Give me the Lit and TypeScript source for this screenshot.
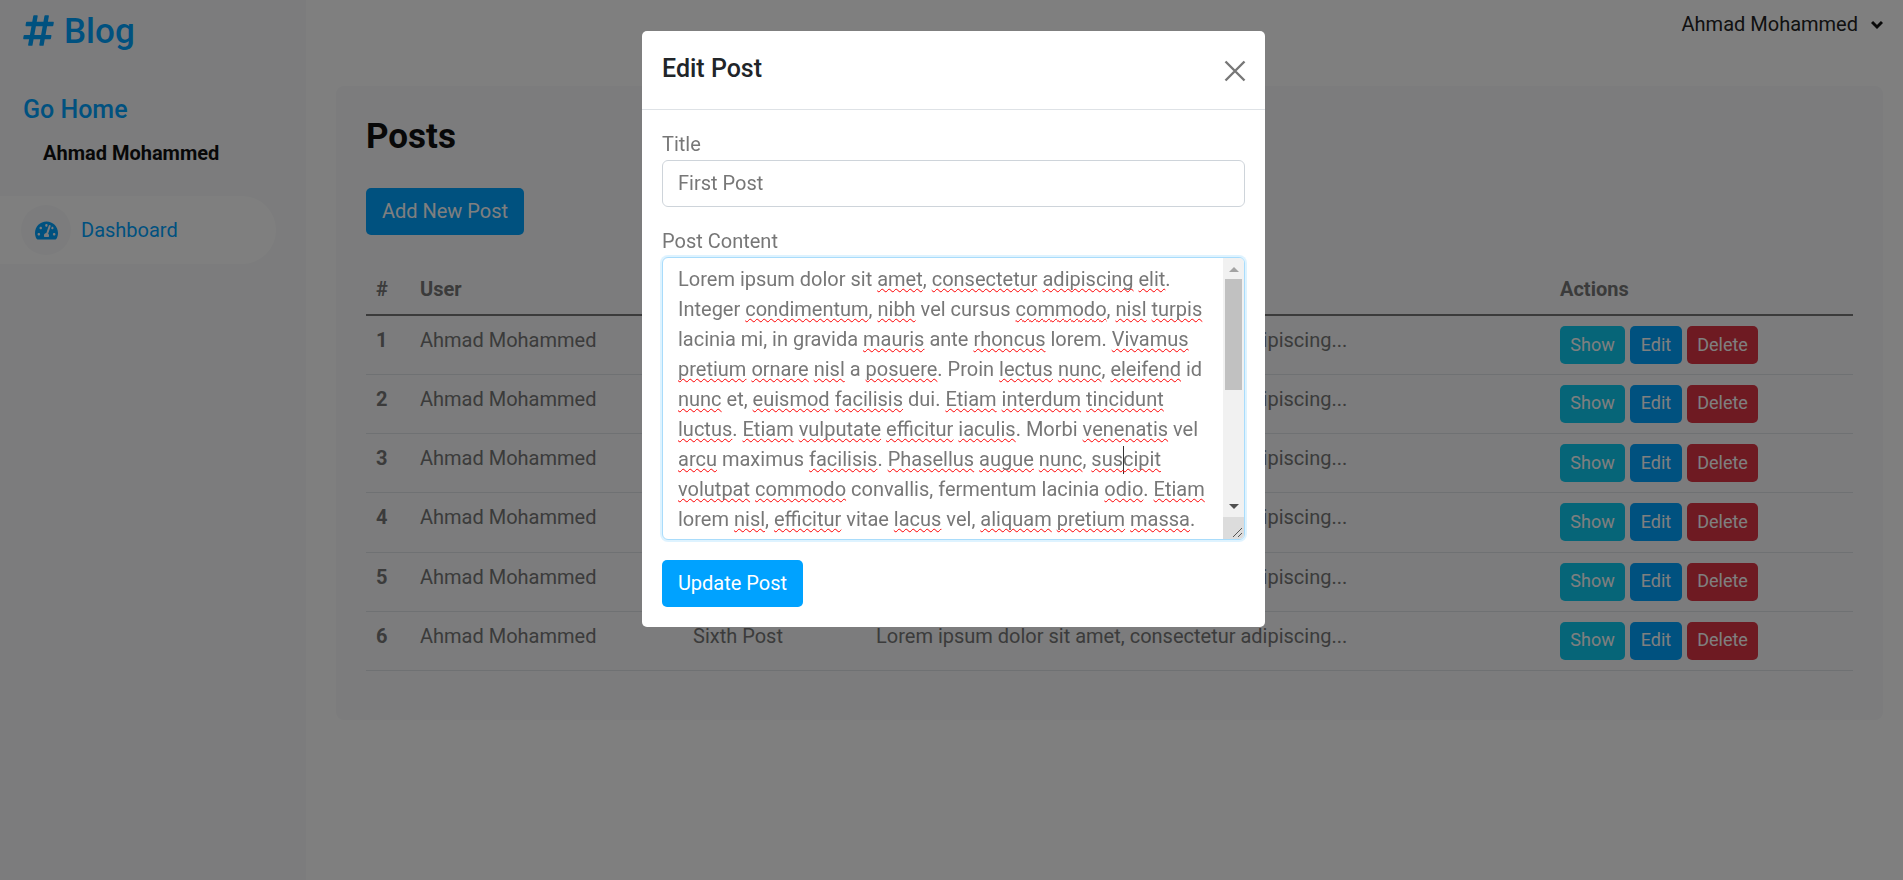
import { LitElement, html, css, svg } from "lit";
import { customElement } from "lit/decorators.js";

const posts = ["First Post", "Second Post", "Third Post", "Fourth Post", "Fifth Post", "Sixth Post"];
const gauge = svg`<path d="M288 32C128.94 32 0 160.94 0 320c0 52.8 14.25 102.26 39.06 144.8 5.61 9.62 16.3 15.2 27.44 15.2h443c11.14 0 21.83-5.58 27.44-15.2C561.75 422.26 576 372.8 576 320c0-159.06-128.94-288-288-288zm0 64c14.71 0 26.58 10.13 30.32 23.65-1.11 2.26-2.64 4.23-3.45 6.67l-9.22 27.67c-5.13 3.49-10.97 6.01-17.64 6.01-17.67 0-32-14.33-32-32S270.33 96 288 96zM96 384c-17.67 0-32-14.33-32-32s14.33-32 32-32 32 14.33 32 32-14.33 32-32 32zm48-160c-17.67 0-32-14.33-32-32s14.33-32 32-32 32 14.33 32 32-14.33 32-32 32zm246.77-72.41l-61.33 184C343.13 347.33 352 364.54 352 384c0 11.72-3.38 22.55-8.88 32H232.88c-5.5-9.45-8.88-20.28-8.88-32 0-33.94 26.5-61.43 59.9-63.59l61.34-184.01c4.17-12.56 17.73-19.45 30.36-15.17 12.57 4.19 19.35 17.77 15.17 30.36zm14.66 57.2l15.52-46.55c3.47-1.29 7.13-2.23 11.05-2.23 17.67 0 32 14.33 32 32s-14.33 32-32 32c-11.38-.01-20.89-6.28-26.57-15.22zM480 384c-17.67 0-32-14.33-32-32s14.33-32 32-32 32 14.33 32 32-14.33 32-32 32z"/>`;
const hash = svg`<path d="M440.667 182.109l7.143-40c1.313-7.355-4.342-14.109-11.813-14.109h-74.81l14.623-81.891C377.123 38.754 371.468 32 363.997 32h-40.632a12 12 0 0 0-11.813 9.891L296.175 128H197.54l14.623-81.891C213.477 38.754 207.822 32 200.35 32h-40.632a12 12 0 0 0-11.813 9.891L132.528 128H53.432a12 12 0 0 0-11.813 9.891l-7.143 40C33.163 185.246 38.818 192 46.289 192h74.81L98.242 320H19.146a12 12 0 0 0-11.813 9.891l-7.143 40C-1.123 377.246 4.532 384 12.003 384h74.81L72.19 465.891C70.877 473.246 76.532 480 84.003 480h40.632a12 12 0 0 0 11.813-9.891L151.826 384h98.634l-14.623 81.891C234.523 473.246 240.178 480 247.65 480h40.632a12 12 0 0 0 11.813-9.891L315.472 384h79.096a12 12 0 0 0 11.813-9.891l7.143-40c1.313-7.355-4.342-14.109-11.813-14.109h-74.81l22.857-128h79.096a12 12 0 0 0 11.813-9.891zM261.889 320h-98.634l22.857-128h98.634l-22.857 128z"/>`;

@customElement("app-root")
export class AppRoot extends LitElement {
  static styles = css`
    :host { display: block; height: 880px; overflow: hidden; font-family: Roboto, "Liberation Sans", sans-serif; font-size: 20px; color: #777; background: #fff; }
    * { box-sizing: border-box; }
    .page { display: flex; height: 880px; }
    .side { width: 306px; flex: none; background: #f8f9fa; }
    .brand { height: 62px; padding: 11px 0 0 23px; font-size: 35px; line-height: 42px; font-weight: 500; color: #00a2ff; white-space: nowrap; display: flex; align-items: flex-start; gap: 10px; }
    .hash { width: 31px; height: 35px; margin-top: 2px; fill: #00a2ff; }
    .home { margin-top: 33px; padding-left: 23px; font-size: 25px; line-height: 30px; font-weight: 500; color: #00a2ff; }
    .who { margin-top: 14px; padding-left: 43px; line-height: 28px; font-weight: 700; color: #111; }
    .nav { margin-top: 29px; width: 276px; height: 68px; display: flex; align-items: center; gap: 10px; padding-left: 21px; background: #fff; border-radius: 0 34px 34px 0; color: #00a2ff; }
    .circle { width: 50px; height: 50px; border-radius: 50%; background: #f8f9fa; display: flex; align-items: center; justify-content: center; }
    .circle svg { width: 23px; height: 21px; fill: #00a2ff; }
    .main { flex: 1; min-width: 0; padding-right: 20px; }
    .top { height: 86px; display: flex; justify-content: flex-end; align-items: flex-start; gap: 13px; padding-top: 10px; line-height: 28px; color: #222; }
    .chev { width: 12px; height: 28px; fill: none; stroke: #111; stroke-width: 3; }
    .card { margin-left: 30px; height: 634px; background: #f8f9fa; border-radius: 8px; padding: 31px 30px 0; }
    h1 { margin: 0; font-size: 35px; line-height: 40px; font-weight: 700; color: #111; }
    .btn { display: inline-flex; align-items: center; justify-content: center; border-radius: 5px; color: #fff; background: #00a2ff; padding-bottom: 2px; }
    .add { margin-top: 31px; width: 158px; height: 47px; }
    table { margin-top: 37px; width: 1487px; border-collapse: collapse; table-layout: fixed; }
    th { text-align: left; padding: 3px 10px 0; height: 43px; vertical-align: top; line-height: 28px; font-weight: 700; border-bottom: 2px solid #777; }
    td { padding: 11px 10px 0; height: 59.25px; vertical-align: top; line-height: 27px; border-bottom: 1px solid #dee2e6; }
    .num { font-weight: 700; }
    .acts { padding: 10px 0 0 10px; }
    .row { display: flex; gap: 5px; }
    .sm { height: 38px; font-size: 18px; }
    .show { width: 65px; background: #0dcaf0; }
    .edit { width: 52px; background: #00a2ff; }
    .del { width: 71px; background: #dc3545; }
    .overlay { position: fixed; inset: 0; background: rgba(0,0,0,.5); display: flex; align-items: flex-start; padding: 31px 0 0 642px; }
    .modal { width: 623px; height: 596px; background: #fff; border-radius: 5px; display: flex; flex-direction: column; }
    .head { height: 79px; flex: none; border-bottom: 1px solid #dee2e6; display: flex; align-items: center; justify-content: space-between; padding: 0 20px; }
    .head h2 { margin: 0 0 3px; font-size: 25px; font-weight: 500; color: #212529; line-height: 30px; }
    .x { width: 24px; height: 24px; margin: 1px -2px 0 0; stroke: #777; stroke-width: 2.4; fill: none; }
    .body { padding: 20px 20px 0; display: flex; flex-direction: column; }
    label { line-height: 28px; display: block; }
    .input { margin-top: 2px; height: 47px; border: 1px solid #ced4da; border-radius: 6px; padding: 0 15px 2px; display: flex; align-items: center; margin-bottom: 20px; }
    .area { margin-top: 2px; height: 283px; border: 1px solid #a9dcfb; border-radius: 6px; box-shadow: 0 0 0 2px rgba(0,162,255,.13); display: flex; overflow: hidden; background: #fff; }
    .text { flex: 1; min-width: 0; padding: 6px 15px 0; line-height: 30px; overflow: hidden; }
    .w { text-decoration: underline wavy #f00 1.3px; text-underline-offset: 2px; text-decoration-skip-ink: none; }
    .caret { display: inline-block; width: 1px; height: 28px; margin-right: -1px; background: #333; vertical-align: -8px; }
    .bar { width: 21px; flex: none; padding: 0 2px; background: #f1f1f1; display: flex; flex-direction: column; align-items: center; }
    .up { width: 0; height: 0; margin-top: 9px; border: 5px solid transparent; border-top: 0; border-bottom: 5px solid #a3a3a3; }
    .thumb { width: 17px; height: 111px; margin-top: 7px; background: #c1c1c1; }
    .down { width: 0; height: 0; margin-top: 114px; border: 5px solid transparent; border-bottom: 0; border-top: 5px solid #505050; }
    .grip { margin: auto -2px 0; flex: none; width: 21px; height: 22px; background: #dcdcdc; stroke: #555; stroke-width: 1; fill: none; }
    .update { margin-top: 20px; width: 141px; height: 47px; }
  `;

  private w(t: string) { return html`<span class="w">${t}</span>`; }

  render() {
    const w = (t: string) => this.w(t);
    return html`
      <div class="page">
        <aside class="side">
          <div class="brand"><svg class="hash" viewBox="0 0 448 512">${hash}</svg><span>Blog</span></div>
          <div class="home">Go Home</div>
          <div class="who">Ahmad Mohammed</div>
          <div class="nav">
            <span class="circle"><svg viewBox="0 0 576 512">${gauge}</svg></span>
            <span>Dashboard</span>
          </div>
        </aside>
        <div class="main">
          <div class="top">
            <span>Ahmad Mohammed</span>
            <svg class="chev" viewBox="0 0 12 28"><path d="M1 12 6 17l5-5"/></svg>
          </div>
          <section class="card">
            <h1>Posts</h1>
            <div class="btn add">Add New Post</div>
            <table>
              <colgroup><col style="width:44px" /><col style="width:273px" /><col style="width:183px" /><col style="width:684px" /><col style="width:303px" /></colgroup>
              <thead><tr><th>#</th><th>User</th><th>Title</th><th>Post Content</th><th>Actions</th></tr></thead>
              <tbody>
                ${posts.map((p, i) => html`<tr>
                  <td class="num">${i + 1}</td>
                  <td>Ahmad Mohammed</td>
                  <td>${p}</td>
                  <td>Lorem ipsum dolor sit amet, consectetur adipiscing...</td>
                  <td class="acts"><div class="row">
                    <span class="btn sm show">Show</span><span class="btn sm edit">Edit</span><span class="btn sm del">Delete</span>
                  </div></td>
                </tr>`)}
              </tbody>
            </table>
          </section>
        </div>
      </div>
      <div class="overlay">
        <div class="modal">
          <div class="head">
            <h2>Edit Post</h2>
            <svg class="x" viewBox="0 0 24 24"><path d="M2.500 2.500l19 19M21.500 2.500l-19 19"/></svg>
          </div>
          <div class="body">
            <label>Title</label>
            <div class="input">First Post</div>
            <label>Post Content</label>
            <div class="area">
              <div class="text">Lorem ipsum dolor sit ${w("amet")}, ${w("consectetur")} ${w("adipiscing")} ${w("elit")}. Integer ${w("condimentum")}, ${w("nibh")} vel cursus ${w("commodo")}, ${w("nisl")} ${w("turpis")} lacinia mi, in gravida ${w("mauris")} ante ${w("rhoncus")} lorem. ${w("Vivamus")} ${w("pretium")} ${w("ornare")} ${w("nisl")} a ${w("posuere")}. Proin ${w("lectus")} ${w("nunc")}, ${w("eleifend")} id ${w("nunc")} et, ${w("euismod")} ${w("facilisis")} dui. ${w("Etiam")} ${w("interdum")} ${w("tincidunt")} ${w("luctus")}. ${w("Etiam")} ${w("vulputate")} ${w("efficitur")} ${w("iaculis")}. Morbi ${w("venenatis")} vel ${w("arcu")} maximus ${w("facilisis")}. ${w("Phasellus")} ${w("augue")} ${w("nunc")}, <span class="w">sus</span><span class="caret"></span><span class="w">cipit</span> ${w("volutpat")} ${w("commodo")} convallis, fermentum lacinia ${w("odio")}. ${w("Etiam")} lorem ${w("nisl")}, ${w("efficitur")} vitae ${w("lacus")} vel, ${w("aliquam")} ${w("pretium")} ${w("massa")}.</div>
              <div class="bar">
                <span class="up"></span>
                <span class="thumb"></span>
                <span class="down"></span>
                <svg class="grip" viewBox="0 0 21 22"><path d="M10 20 19 11M15 20l4-4"/></svg>
              </div>
            </div>
            <div class="btn update">Update Post</div>
          </div>
        </div>
      </div>
    `;
  }
}
